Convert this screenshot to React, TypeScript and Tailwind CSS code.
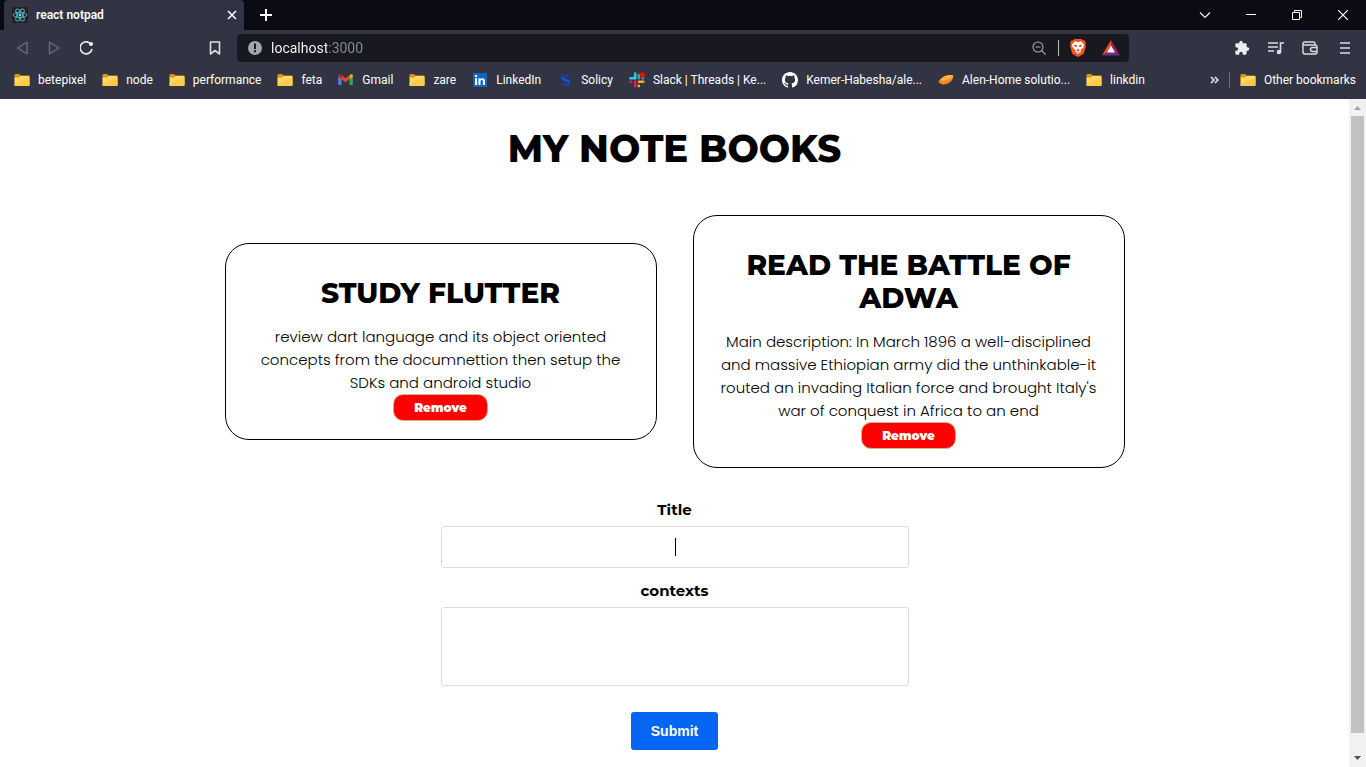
import React from 'react';

function Folder() {
  return (
    <svg viewBox="0 0 16 14" className="h-[14px] w-4 shrink-0" aria-hidden="true">
      <path d="M.5 2.200Q.5 1 1.500 1H5l1.600 1.400H14.600Q15.500 2.400 15.500 3.600v2H.5z" fill="#d9950c" />
      <path d="M.5 4.400H5L6.600 3H14.500q1 0 1 1v8q0 1-1 1H1.500q-1 0-1-1z" fill="#ffd863" />
      <path d="M.5 10.800 15.500 5v7q0 1-1 1H1.500q-1 0-1-1z" fill="#fdcb48" />
    </svg>
  );
}

function Gmail() {
  return (
    <svg viewBox="0 0 16 12" className="mr-px h-[11px] w-[15px] shrink-0" aria-hidden="true">
      <path d="M0 2v9q0 1 1 1h2.700V5.500z" fill="#4285f4" />
      <path d="M16 2v9q0 1-1 1h-2.700V5.500z" fill="#34a853" />
      <path d="M12.300 1.500V5.800L16 3V1.700Q15.600 0 13.800.4z" fill="#fbbc04" />
      <path d="M3.700 1.500V5.800L0 3V1.700Q.4 0 2.200.4z" fill="#c5221f" />
      <path d="M3.700 1.400 8 4.600l4.300-3.200v4.400L8 9 3.700 5.800z" fill="#ea4335" />
    </svg>
  );
}

function LinkedIn() {
  return (
    <svg viewBox="0 0 14 14" className="mx-px size-[14px] shrink-0" aria-hidden="true">
      <rect width="14" height="14" fill="#0a66c2" />
      <path d="M2 5.300h2.100V12H2zM5.400 5.300h2v.9c.9-1.500 4.600-1.500 4.600 1.700V12H9.900V8.500c0-2.100-2.400-1.900-2.400 0V12H5.400z" fill="#fff" />
      <circle cx="3.050" cy="3.100" r="1.250" fill="#fff" />
    </svg>
  );
}

function Solicy() {
  return (
    <svg viewBox="0 0 16 16" className="size-4 shrink-0" aria-hidden="true">
      <path d="M12 5C10.500 2.800 5 3 5 5.500c0 3 7 2 7 5 0 2.700-5.500 3-7.200.7" fill="none" stroke="#1b3f94" strokeWidth="3.200" />
      <path d="M5 5.700c.8 2.500 6.500 1.900 7 4.600" fill="none" stroke="#0c63d4" strokeWidth="1.800" />
    </svg>
  );
}

function Slack() {
  return (
    <svg viewBox="0 0 16 16" className="size-4 shrink-0" aria-hidden="true" strokeWidth="2.600" strokeLinecap="round">
      <path d="M1.500 6.300h4.200M6.200 1.600v.1" stroke="#36c5f0" />
      <path d="M6.200 3.500v2.800" stroke="#36c5f0" />
      <path d="M9.800 3v3.300M13.800 6.300h.2" stroke="#2eb67d" />
      <path d="M10 9.800h4.300M9.800 13.800v.3" stroke="#ecb22e" />
      <path d="M6.200 9.800v4.400M1.600 9.800h.3" stroke="#e01e5a" />
      <circle cx="13.400" cy="2.800" r="2.600" fill="#f00" />
    </svg>
  );
}

function Github() {
  return (
    <svg viewBox="0 0 16 16" className="size-4 shrink-0" aria-hidden="true">
      <path fill="#fff" d="M8 0C3.580 0 0 3.580 0 8c0 3.540 2.290 6.530 5.470 7.590.4.070.55-.17.55-.38 0-.19-.01-.82-.01-1.490-2.010.37-2.530-.49-2.690-.94-.09-.23-.48-.94-.82-1.130-.28-.15-.68-.52-.01-.53.63-.01 1.080.58 1.230.82.72 1.210 1.870.87 2.330.66.070-.52.28-.87.51-1.070-1.780-.2-3.640-.89-3.640-3.950 0-.87.31-1.590.82-2.150-.08-.2-.36-1.020.08-2.120 0 0 .67-.21 2.200.82a7.600 7.600 0 0 1 4 0c1.530-1.040 2.200-.82 2.200-.82.44 1.100.16 1.920.08 2.120.51.56.82 1.270.82 2.150 0 3.070-1.870 3.750-3.650 3.950.29.25.54.73.54 1.480 0 1.070-.01 1.930-.01 2.200 0 .21.15.46.55.38A8 8 0 0 0 16 8c0-4.420-3.580-8-8-8z" />
    </svg>
  );
}

function Alen() {
  return (
    <svg viewBox="0 0 16 16" className="size-4 shrink-0" aria-hidden="true">
      <path d="M.5 10.500C2 5 9 2.300 15 3.200c1.200 4-3 8.600-8.500 9.300-1.700.2-3-.2-3.700-1z" fill="#f58a1f" />
      <path d="M2 8.300C5 4.500 10 2.600 15 3.200c.3 1-.2 2-1 2.800-3.500 2-8 3-12 2.300z" fill="#ffb23c" />
    </svg>
  );
}

function ReactLogo() {
  return (
    <svg viewBox="0 0 16 16" className="size-4 shrink-0" aria-hidden="true">
      <rect width="16" height="16" rx="2" fill="#222" />
      <g fill="none" stroke="#54b8d0" strokeWidth=".9">
        <ellipse cx="8" cy="8" rx="6.800" ry="2.600" />
        <ellipse cx="8" cy="8" rx="6.800" ry="2.600" transform="rotate(60 8 8)" />
        <ellipse cx="8" cy="8" rx="6.800" ry="2.600" transform="rotate(120 8 8)" />
      </g>
      <circle cx="8" cy="8" r="1.400" fill="#61dafb" />
    </svg>
  );
}

const bookmarks = [
  { label: 'betepixel', Icon: Folder },
  { label: 'node', Icon: Folder },
  { label: 'performance', Icon: Folder },
  { label: 'feta', Icon: Folder },
  { label: 'Gmail', Icon: Gmail },
  { label: 'zare', Icon: Folder },
  { label: 'LinkedIn', Icon: LinkedIn },
  { label: 'Solicy', Icon: Solicy },
  { label: 'Slack | Threads | Ke...', Icon: Slack },
  { label: 'Kemer-Habesha/ale...', Icon: Github },
  { label: 'Alen-Home solutio...', Icon: Alen },
  { label: 'linkdin', Icon: Folder },
];

function TabStrip() {
  return (
    <div className="flex h-[30px] items-stretch bg-[#0b0b14] pl-1">
      <div className="flex w-60 items-center rounded-t bg-[#323443] pl-2 pr-[7px]">
        <ReactLogo />
        <span className="ml-2 flex-1 font-semibold">react notpad</span>
        <button aria-label="Close tab" className="flex">
          <svg viewBox="0 0 10 10" className="size-[10px]" stroke="#fff" strokeWidth="1.600"><path d="M1 1l8 8M9 1 1 9" /></svg>
        </button>
      </div>
      <button aria-label="New tab" className="ml-4 flex items-center">
        <svg viewBox="0 0 12 12" className="size-3" stroke="#fff" strokeWidth="2"><path d="M6 0v12M0 6h12" /></svg>
      </button>
      <div className="ml-auto flex">
        <button aria-label="Search tabs" className="flex w-[46px] items-center justify-center">
          <svg viewBox="0 0 12 8" className="h-2 w-3" fill="none" stroke="#eee" strokeWidth="1.200"><path d="m1 1.500 5 5 5-5" /></svg>
        </button>
        <button aria-label="Minimize" className="flex w-[46px] items-center justify-center">
          <svg viewBox="0 0 10 10" className="size-[10px]"><path d="M0 4h10v1H0z" fill="#fff" /></svg>
        </button>
        <button aria-label="Restore" className="flex w-[46px] items-center justify-center">
          <svg viewBox="0 0 10 10" className="size-[10px]" fill="none" stroke="#fff"><path d="M.5 2.500h7v7h-7zM2.500 2.500v-2h7v7h-2" /></svg>
        </button>
        <button aria-label="Close window" className="flex w-[46px] items-center justify-center">
          <svg viewBox="0 0 10 10" className="size-[10px]" stroke="#fff" strokeWidth="1.200"><path d="m0 0 10 10M10 0 0 10" /></svg>
        </button>
      </div>
    </div>
  );
}

function Toolbar() {
  return (
    <div className="flex items-center pt-1">
      <div className="flex flex-1 items-center justify-between px-4">
        <div className="flex items-center gap-[18px]">
          <button aria-label="Back">
            <svg viewBox="0 0 14 14" className="size-[14px]" fill="none" stroke="#6d6f7c" strokeWidth="1.300" strokeLinejoin="round"><path d="M11 1.200v11.600L1.500 7z" /></svg>
          </button>
          <button aria-label="Forward">
            <svg viewBox="0 0 14 14" className="size-[14px]" fill="none" stroke="#6d6f7c" strokeWidth="1.300" strokeLinejoin="round"><path d="M1.500 1.200v11.600L11 7z" /></svg>
          </button>
          <button aria-label="Reload">
            <svg viewBox="0 0 14 14" className="size-[14px]" fill="none" stroke="#eee" strokeWidth="1.600"><path d="M9.500 1.900A6 6 0 1 0 12 8" /><circle cx="11" cy="3" r="1.300" fill="#eee" /></svg>
          </button>
        </div>
        <button aria-label="Bookmark this page">
          <svg viewBox="0 0 12 14" className="h-[14px] w-3" fill="none" stroke="#ddd" strokeWidth="1.600" strokeLinejoin="round"><path d="M1.500 1h9v12L6 9.500 1.500 13z" /></svg>
        </button>
      </div>
      <div className="flex h-7 w-[892px] items-center rounded bg-[#17191f] pl-[11px] pr-[9px]">
        <svg viewBox="0 0 14 14" className="size-[14px]" aria-hidden="true"><circle cx="7" cy="7" r="7" fill="#a2a5ae" /><path d="M6 2.500h2V8H6zM6 9.300h2v2H6z" fill="#17191f" /></svg>
        <input
          aria-label="Address"
          type="text"
          defaultValue="localhost:3000"
          className="ml-[9px] min-w-0 flex-1 bg-[linear-gradient(to_right,#fff_56px,#8b8d96_56px)] bg-clip-text text-sm text-transparent outline-none"
        />
        <button aria-label="Zoom">
          <svg viewBox="0 0 14 14" className="size-[14px]" fill="none" stroke="#aaa" strokeWidth="1.100"><circle cx="6" cy="6" r="5" /><path d="M3.500 6h5M9.700 9.700l3.800 3.800" /></svg>
        </button>
        <span className="ml-3 h-4 w-px bg-[#bbb]" />
        <button aria-label="Brave Shields" className="ml-[11px]">
          <svg viewBox="0 0 16 18" className="h-[18px] w-4">
            <path d="M4.500 0h7l1.500 1.500 1.500-.2L16 4l-.6 1.500.5 2-2 6.500q-.4 1-1.300 1.500L8 18l-4.600-2.500Q2.500 15 2.100 14L.1 7.500l.5-2L0 4l1.500-2.700 1.500.2z" fill="#fb5420" />
            <path d="m8 3 3.200-.5L14 5.500l-.5 2.700-3 3 .3 1.500L8 15l-2.800-2.300.3-1.500-3-3L2 5.500l2.800-3z" fill="#fff" />
            <path d="m4 5.500 3 .8-.3 2L4.500 7.500zM12 5.500l-3 .8.300 2 2.200-.8zM8 9l.6 1.500L10 11.500l-2 .8-2-.8 1.400-1zM6.700 13.200 8 12.500l1.300.7L8 14z" fill="#fb5420" />
          </svg>
        </button>
        <button aria-label="Brave Rewards" className="ml-4">
          <svg viewBox="0 0 18 16" className="h-4 w-[18px]">
            <path d="M9 0 0 15.500 6 12 9 6z" fill="#ff4724" />
            <path d="m9 0 9 15.500L12 12 9 6z" fill="#9e1f63" />
            <path d="M0 15.500h18L12.500 12h-7z" fill="#662d91" />
            <path d="m9 5.500 4 7H5z" fill="#fff" />
          </svg>
        </button>
      </div>
      <div className="flex flex-1 items-center justify-end gap-[18px] px-4">
        <button aria-label="Extensions">
          <svg viewBox="0 0 24 24" className="size-4" fill="#eee"><path d="M20.500 11H19V7a2 2 0 0 0-2-2h-4V3.500a2.500 2.500 0 0 0-5 0V5H4a2 2 0 0 0-2 2v3.800h1.500a2.700 2.700 0 0 1 0 5.400H2V20c0 1.100.9 2 2 2h3.800v-1.500a2.700 2.700 0 0 1 5.400 0V22H17a2 2 0 0 0 2-2v-4h1.500a2.500 2.500 0 0 0 0-5z" /></svg>
        </button>
        <button aria-label="Media controls">
          <svg viewBox="0 0 16 14" className="h-[14px] w-4" fill="none" stroke="#ddd" strokeWidth="1.600"><path d="M0 2h10M0 6h10M0 10h6M12.500 11V2h3.500" /><circle cx="11" cy="11" r="1.500" fill="#ddd" /></svg>
        </button>
        <button aria-label="Wallet">
          <svg viewBox="0 0 16 14" className="h-[14px] w-4" fill="none" stroke="#ddd" strokeWidth="1.400"><path d="M13 4V2.500Q13 1 11.500 1H2.500Q1 1 1 2.500V11q0 2 2 2h10q2 0 2-2V6q0-2-2-2H2Q1 4 1 3M15 6.500h-4.500a2 2 0 0 0 0 4H15" /></svg>
        </button>
        <button aria-label="Menu" className="ml-1">
          <svg viewBox="0 0 10 12" className="h-3 w-[10px]" stroke="#ddd" strokeWidth="1.600"><path d="M0 1h10M0 6h10M0 11h10" /></svg>
        </button>
      </div>
    </div>
  );
}

function Bookmarks() {
  return (
    <nav className="flex h-[37px] items-center pb-0.5 pl-[14px] pr-[10px] whitespace-nowrap">
      <div className="flex items-center gap-4">
        {bookmarks.map(({ label, Icon }) => (
          <a key={label} href="#" className="flex items-center gap-2"><Icon />{label}</a>
        ))}
      </div>
      <button aria-label="More bookmarks" className="ml-auto">
        <svg viewBox="0 0 9 8" className="h-2 w-[9px]" fill="none" stroke="#eee" strokeWidth="1.500"><path d="m1 1 3 3-3 3M5 1l3 3-3 3" /></svg>
      </button>
      <span className="ml-[10px] h-4 w-px bg-[#6a6c78]" />
      <a href="#" className="ml-[10px] flex items-center gap-2"><Folder />Other bookmarks</a>
    </nav>
  );
}

const heading = "font-['Montserrat','Inter',sans-serif]";

function NoteCard({ title, text }: { title: string; text: string }) {
  return (
    <article className="flex flex-col items-center rounded-[24px] border border-black px-5 pb-[18px] pt-[33px] text-center">
      <h2 className={`${heading} mb-[15px] text-[28px] font-extrabold leading-[33px] uppercase`}>{title}</h2>
      <p className="font-['Poppins','Inter',sans-serif] text-[15px] leading-[23px] font-light">{text}</p>
      <button className={`${heading} h-[27px] rounded-[10px] border border-[#c9b98c] bg-[#f00] px-5 text-xs font-black text-white`}>Remove</button>
    </article>
  );
}

function Notepad() {
  return (
    <main className="min-w-0 flex-1 overflow-hidden px-6 text-black">
      <h1 className={`${heading} mt-7 text-center text-[37px] leading-[44px] font-extrabold`}>MY NOTE BOOKS</h1>
      <section className="mx-auto mt-11 grid max-w-[900px] grid-cols-2 items-center gap-9">
        <NoteCard title="Study flutter" text="review dart language and its object oriented concepts from the documnettion then setup the SDKs and android studio" />
        <NoteCard title="Read the battle of Adwa" text="Main description: In March 1896 a well-disciplined and massive Ethiopian army did the unthinkable-it routed an invading Italian force and brought Italy's war of conquest in Africa to an end" />
      </section>
      <form className="mx-auto mt-[31px] flex max-w-[468px] flex-col items-center" onSubmit={(e) => e.preventDefault()}>
        <label htmlFor="title" className={`${heading} mb-[5px] text-[15px] leading-[22px] font-bold`}>Title</label>
        <div className="relative w-full">
          <input id="title" type="text" className="block h-[42px] w-full rounded-[3px] border border-[#ddd] px-3 text-center text-base caret-transparent outline-none" />
          <span className="absolute top-3 left-1/2 h-[18px] w-px bg-black" />
        </div>
        <label htmlFor="contexts" className={`${heading} mt-3 mb-[5px] text-[15px] leading-[22px] font-bold`}>contexts</label>
        <textarea id="contexts" className="block h-[79px] w-full resize-none rounded-[3px] border border-[#ddd] p-3 outline-none" />
        <button type="submit" className="mt-[26px] h-[38px] rounded-[3px] bg-[#0566f4] px-5 font-['Liberation_Sans',sans-serif] text-sm font-bold text-white">Submit</button>
      </form>
    </main>
  );
}

function Scrollbar() {
  return (
    <div className="flex w-[17px] flex-col items-center bg-[#f1f1f1]" aria-hidden="true">
      <svg viewBox="0 0 17 17" className="size-[17px]"><path d="M5 11h7L8.500 7z" fill="#a3a3a3" /></svg>
      <div className="w-[13px] flex-1 bg-[#c1c1c1]" />
      <svg viewBox="0 0 17 34" className="h-[34px] w-[17px]"><path d="M5 23h7l-3.500 4z" fill="#505050" /></svg>
    </div>
  );
}

export default function App() {
  return (
    <div className="flex h-screen flex-col bg-white">
      <header className="bg-[#323443] font-['Roboto',sans-serif] text-xs text-white">
        <TabStrip />
        <Toolbar />
        <Bookmarks />
      </header>
      <div className="flex min-h-0 flex-1">
        <Notepad />
        <Scrollbar />
      </div>
    </div>
  );
}
